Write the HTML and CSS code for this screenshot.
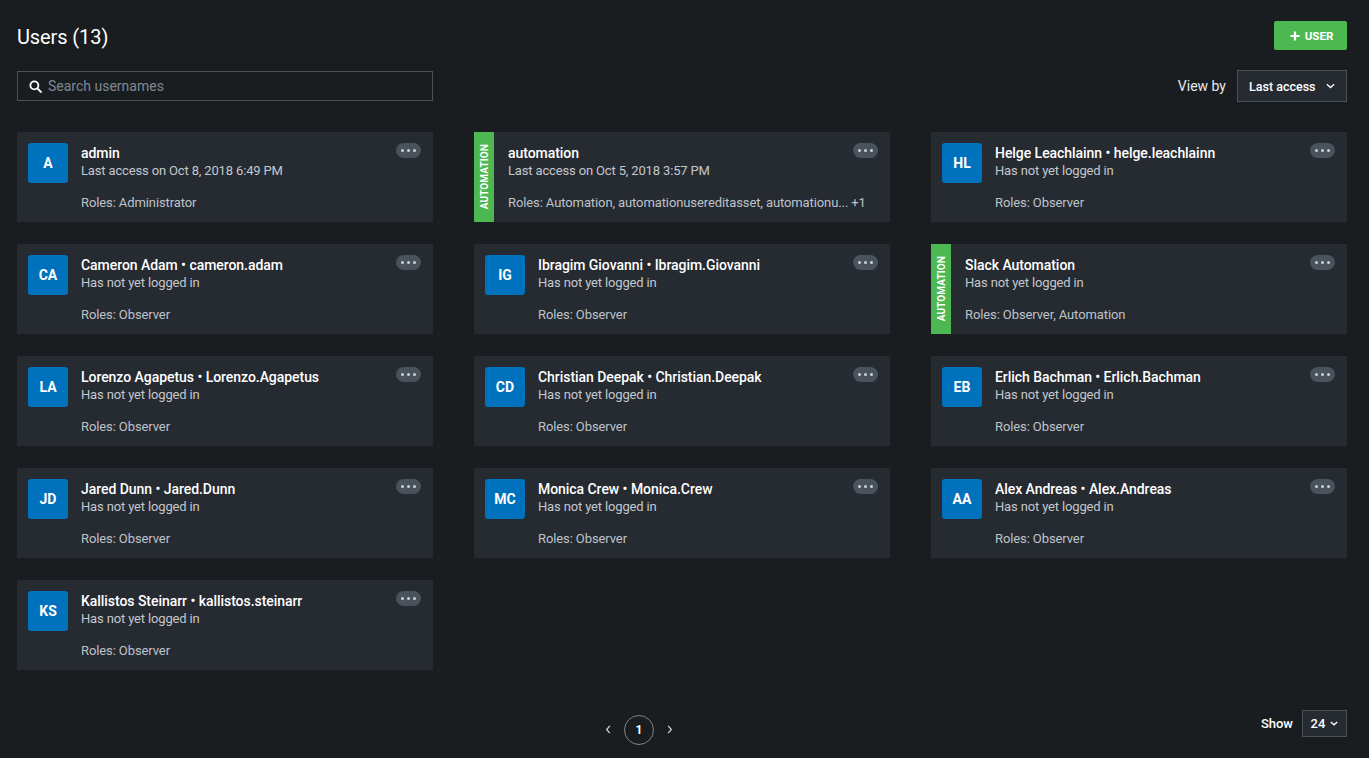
FILE: index.html
```html
<!DOCTYPE html>
<html lang="en">
<head>
<meta charset="utf-8">
<title>Users</title>
<link rel="stylesheet" href="styles.css">
</head>
<body>
<div class="page">
  <header class="top">
    <h1 class="title">Users (13)</h1>
    <button class="add-btn"><svg class="plus" viewBox="0 0 10 10" width="10" height="10"><path d="M5 0.5v9M0.5 5h9" stroke="#fff" stroke-width="2.2"/></svg>USER</button>
  </header>
  <div class="toolbar">
    <div class="search">
      <svg class="search-icon" viewBox="0 0 14 14" width="13" height="13"><circle cx="5.8" cy="5.8" r="4.3" fill="none" stroke="#fff" stroke-width="2"/><path d="M9 9l3.8 3.8" stroke="#fff" stroke-width="2.2" stroke-linecap="round"/></svg>
      <span class="placeholder">Search usernames</span>
    </div>
    <div class="viewby">
      <span class="viewby-label">View by</span>
      <div class="select">Last access<svg class="chev" viewBox="0 0 10 6" width="9" height="6"><path d="M1 1l4 3.6L9 1" fill="none" stroke="#fff" stroke-width="1.6"/></svg></div>
    </div>
  </div>

  <div class="grid">
    <div class="card"><div class="card-body"><div class="avatar">A</div><div class="info"><div class="name">admin</div><div class="sub">Last access on Oct 8, 2018 6:49 PM</div><div class="roles">Roles: Administrator</div></div><div class="dots"><i></i><i></i><i></i></div></div></div>

    <div class="card"><div class="stripe"><span>AUTOMATION</span></div><div class="card-body auto"><div class="info"><div class="name">automation</div><div class="sub">Last access on Oct 5, 2018 3:57 PM</div><div class="roles">Roles: Automation, automationusereditasset, automationu... +1</div></div><div class="dots"><i></i><i></i><i></i></div></div></div>

    <div class="card"><div class="card-body"><div class="avatar">HL</div><div class="info"><div class="name">Helge Leachlainn • helge.leachlainn</div><div class="sub">Has not yet logged in</div><div class="roles">Roles: Observer</div></div><div class="dots"><i></i><i></i><i></i></div></div></div>

    <div class="card"><div class="card-body"><div class="avatar">CA</div><div class="info"><div class="name">Cameron Adam • cameron.adam</div><div class="sub">Has not yet logged in</div><div class="roles">Roles: Observer</div></div><div class="dots"><i></i><i></i><i></i></div></div></div>

    <div class="card"><div class="card-body"><div class="avatar">IG</div><div class="info"><div class="name">Ibragim Giovanni • Ibragim.Giovanni</div><div class="sub">Has not yet logged in</div><div class="roles">Roles: Observer</div></div><div class="dots"><i></i><i></i><i></i></div></div></div>

    <div class="card"><div class="stripe"><span>AUTOMATION</span></div><div class="card-body auto"><div class="info"><div class="name">Slack Automation</div><div class="sub">Has not yet logged in</div><div class="roles">Roles: Observer, Automation</div></div><div class="dots"><i></i><i></i><i></i></div></div></div>

    <div class="card"><div class="card-body"><div class="avatar">LA</div><div class="info"><div class="name">Lorenzo Agapetus • Lorenzo.Agapetus</div><div class="sub">Has not yet logged in</div><div class="roles">Roles: Observer</div></div><div class="dots"><i></i><i></i><i></i></div></div></div>

    <div class="card"><div class="card-body"><div class="avatar">CD</div><div class="info"><div class="name">Christian Deepak • Christian.Deepak</div><div class="sub">Has not yet logged in</div><div class="roles">Roles: Observer</div></div><div class="dots"><i></i><i></i><i></i></div></div></div>

    <div class="card"><div class="card-body"><div class="avatar">EB</div><div class="info"><div class="name">Erlich Bachman • Erlich.Bachman</div><div class="sub">Has not yet logged in</div><div class="roles">Roles: Observer</div></div><div class="dots"><i></i><i></i><i></i></div></div></div>

    <div class="card"><div class="card-body"><div class="avatar">JD</div><div class="info"><div class="name">Jared Dunn • Jared.Dunn</div><div class="sub">Has not yet logged in</div><div class="roles">Roles: Observer</div></div><div class="dots"><i></i><i></i><i></i></div></div></div>

    <div class="card"><div class="card-body"><div class="avatar">MC</div><div class="info"><div class="name">Monica Crew • Monica.Crew</div><div class="sub">Has not yet logged in</div><div class="roles">Roles: Observer</div></div><div class="dots"><i></i><i></i><i></i></div></div></div>

    <div class="card"><div class="card-body"><div class="avatar">AA</div><div class="info"><div class="name">Alex Andreas • Alex.Andreas</div><div class="sub">Has not yet logged in</div><div class="roles">Roles: Observer</div></div><div class="dots"><i></i><i></i><i></i></div></div></div>

    <div class="card"><div class="card-body"><div class="avatar">KS</div><div class="info"><div class="name">Kallistos Steinarr • kallistos.steinarr</div><div class="sub">Has not yet logged in</div><div class="roles">Roles: Observer</div></div><div class="dots"><i></i><i></i><i></i></div></div></div>
  </div>

  <footer class="footer">
    <div class="pager">
      <svg class="arrow" viewBox="0 0 6 10" width="6" height="9"><path d="M5 1L1.5 5 5 9" fill="none" stroke="#d0d4d9" stroke-width="1.4"/></svg>
      <span class="page-num">1</span>
      <svg class="arrow" viewBox="0 0 6 10" width="6" height="9"><path d="M1 1l3.5 4L1 9" fill="none" stroke="#d0d4d9" stroke-width="1.4"/></svg>
    </div>
    <div class="show">
      <span class="show-label">Show</span>
      <div class="show-select">24<svg class="chev" viewBox="0 0 10 6" width="8" height="5"><path d="M1 1l4 3.6L9 1" fill="none" stroke="#fff" stroke-width="1.6"/></svg></div>
    </div>
  </footer>
</div>
</body>
</html>
```

FILE: styles.css
```css
* { box-sizing: border-box; }
html, body { margin: 0; padding: 0; }
body {
  background: #1a1d20;
  color: #fff;
  font-family: Roboto, "Liberation Sans", Arial, sans-serif;
  width: 1369px;
  height: 758px;
  overflow: hidden;
}
.page {
  width: 1330px;
  margin-left: 17px;
}
.top {
  display: flex;
  justify-content: space-between;
  align-items: center;
  height: 50px;
  padding-top: 21px;
}
.title {
  margin: 0;
  font-size: 20px;
  font-weight: 400;
  line-height: 29px;
  padding-top: 3px;
  letter-spacing: -0.1px;
}
.add-btn {
  width: 73px;
  height: 29px;
  border: 0;
  border-radius: 2px;
  background: #4db851;
  color: #fff;
  font-family: inherit;
  font-size: 11.5px;
  font-weight: 700;
  display: flex;
  align-items: center;
  justify-content: center;
  gap: 5px;
  padding: 0 0 0 2px;
}
.toolbar {
  display: flex;
  justify-content: space-between;
  align-items: center;
  margin-top: 20px;
  height: 32px;
}
.search {
  width: 416px;
  height: 30px;
  border: 1px solid #4b5159;
  display: flex;
  align-items: center;
  padding-left: 11px;
  gap: 6px;
}
.placeholder {
  color: #7f8892;
  font-size: 14px;
}
.viewby {
  display: flex;
  align-items: center;
  gap: 11px;
}
.viewby-label {
  font-size: 14px;
  color: #e6e9ec;
}
.select {
  width: 110px;
  height: 32px;
  border: 1px solid #4b5159;
  background: #262a31;
  display: flex;
  align-items: center;
  justify-content: space-between;
  padding: 0 11px 0 11px;
  font-size: 12.5px;
  font-weight: 500;
}
.grid {
  display: grid;
  grid-template-columns: repeat(3, 416px);
  column-gap: 41px;
  row-gap: 22px;
  margin-top: 30px;
}
.card {
  background: #262a31;
  height: 90px;
  display: flex;
}
.stripe {
  width: 20px;
  background: #4db851;
  display: flex;
  align-items: center;
  justify-content: center;
}
.stripe span {
  writing-mode: vertical-rl;
  transform: rotate(180deg);
  font-size: 10px;
  font-weight: 700;
  letter-spacing: 0.1px;
  color: #fff;
}
.card-body {
  flex: 1;
  display: flex;
  align-items: flex-start;
  padding: 11px 12px 11px 11px;
  min-width: 0;
}
.card-body.auto {
  padding-left: 14px;
}
.avatar {
  width: 40px;
  height: 40px;
  flex: none;
  background: #0071bc;
  border-radius: 3px;
  display: flex;
  align-items: center;
  justify-content: center;
  font-size: 14px;
  font-weight: 700;
  margin-right: 13px;
}
.info {
  flex: 1;
  min-width: 0;
  padding-top: 1px;
}
.name {
  font-size: 14px;
  font-weight: 500;
  line-height: 18px;
  letter-spacing: -0.05px;
  white-space: nowrap;
}
.sub {
  font-size: 13px;
  line-height: 17px;
  letter-spacing: -0.15px;
  color: #c3c8cf;
  white-space: nowrap;
}
.roles {
  margin-top: 15px;
  font-size: 13px;
  line-height: 17px;
  letter-spacing: -0.1px;
  color: #bdc3ca;
  white-space: nowrap;
}
.dots {
  flex: none;
  width: 25px;
  height: 15px;
  border-radius: 8px;
  background: #4a525c;
  display: flex;
  align-items: center;
  justify-content: center;
  gap: 3px;
}
.dots i {
  width: 3px;
  height: 3px;
  border-radius: 50%;
  background: #c9d3dd;
}
.footer {
  margin-top: 41px;
  height: 32px;
  display: flex;
  align-items: center;
}
.pager {
  flex: 1;
  display: flex;
  justify-content: center;
  align-items: center;
  gap: 13px;
  margin-top: 5px;
}
.page-num {
  width: 30px;
  height: 30px;
  border: 1px solid #7c848d;
  border-radius: 50%;
  display: flex;
  align-items: center;
  justify-content: center;
  font-size: 12px;
  font-weight: 700;
}
.show {
  display: flex;
  align-items: center;
  gap: 9px;
  margin-top: -8px;
}
.show-label {
  font-size: 13px;
  font-weight: 500;
}
.show-select {
  width: 45px;
  height: 27px;
  border: 1px solid #4b5159;
  background: #262a31;
  display: flex;
  align-items: center;
  justify-content: center;
  gap: 5px;
  font-size: 13px;
  font-weight: 500;
}
```
